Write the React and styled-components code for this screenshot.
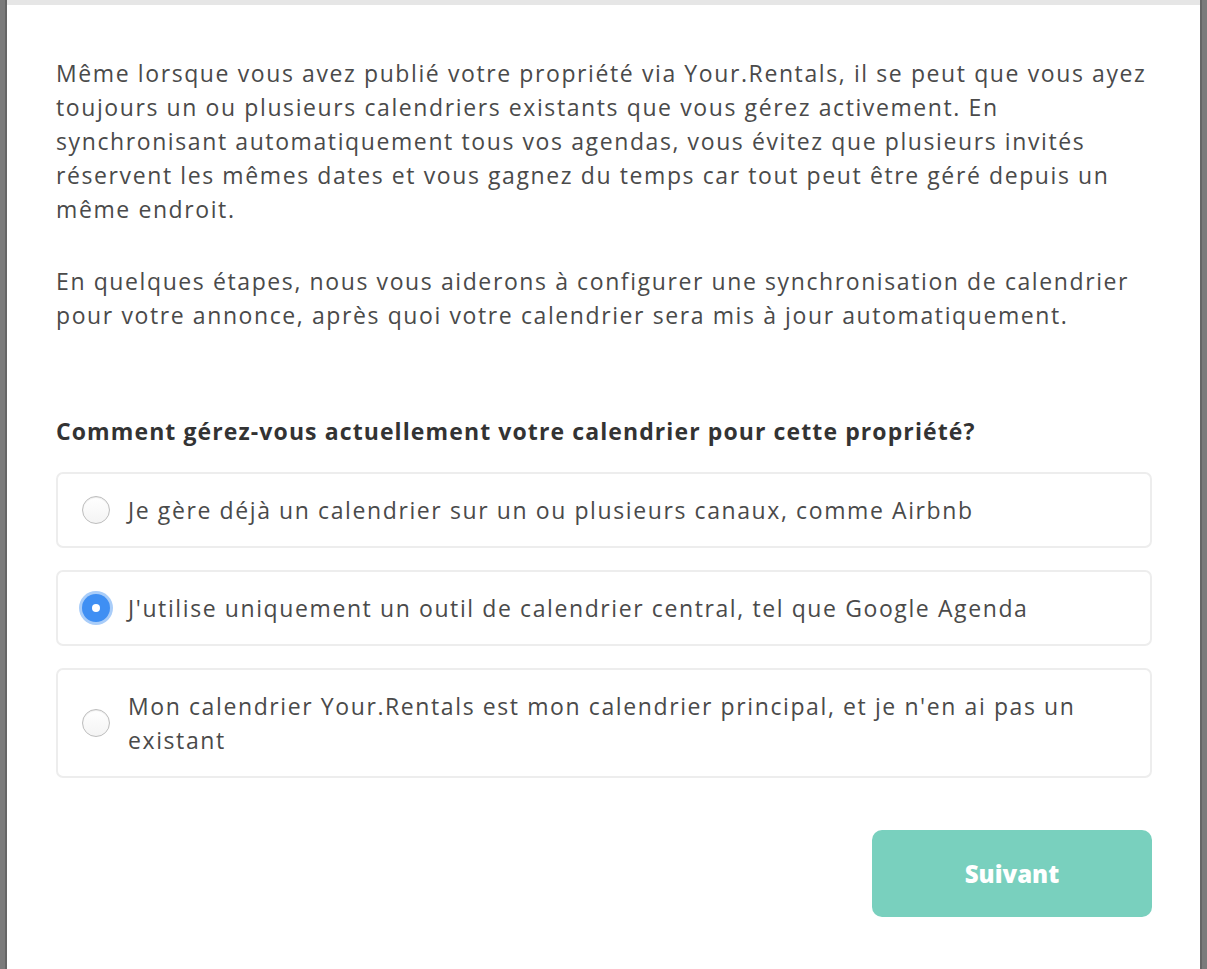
import React, { useState } from "react";
import styled, { createGlobalStyle } from "styled-components";

const GlobalStyle = createGlobalStyle`
  html, body {
    margin: 0;
    padding: 0;
    height: 100%;
  }
  body {
    font-family: "Open Sans", "Noto Sans", sans-serif;
    background: #7b7b7b;
  }
`;

const options = [
  "Je gère déjà un calendrier sur un ou plusieurs canaux, comme Airbnb",
  "J'utilise uniquement un outil de calendrier central, tel que Google Agenda",
  "Mon calendrier Your.Rentals est mon calendrier principal, et je n'en ai pas un existant",
];

export default function App() {
  const [choix, setChoix] = useState(1);

  return (
    <>
      <GlobalStyle />
      <Backdrop>
        <Modal>
          <TopBar />
          <Body>
            <Texte>
              Même lorsque vous avez publié votre propriété via Your.Rentals, il se peut que vous ayez
              toujours un ou plusieurs calendriers existants que vous gérez activement. En
              synchronisant automatiquement tous vos agendas, vous évitez que plusieurs invités
              réservent les mêmes dates et vous gagnez du temps car tout peut être géré depuis un
              même endroit.
            </Texte>
            <Texte>
              En quelques étapes, nous vous aiderons à configurer une synchronisation de calendrier
              pour votre annonce, après quoi votre calendrier sera mis à jour automatiquement.
            </Texte>
            <Question>Comment gérez-vous actuellement votre calendrier pour cette propriété?</Question>
            <Options>
              {options.map((label, i) => (
                <Option key={i} onClick={() => setChoix(i)}>
                  <Radio $checked={choix === i} />
                  <span>{label}</span>
                </Option>
              ))}
            </Options>
            <Footer>
              <Bouton>Suivant</Bouton>
            </Footer>
          </Body>
        </Modal>
      </Backdrop>
    </>
  );
}

const Backdrop = styled.div`
  min-height: 100vh;
  padding: 0 5px 0 5px;
  box-sizing: border-box;
  display: flex;
  justify-content: center;
`;

const Modal = styled.div`
  flex: 1;
  background: #ffffff;
  border-left: 2px solid #666666;
  border-right: 2px solid #666666;
  display: flex;
  flex-direction: column;
`;

const TopBar = styled.div`
  height: 5px;
  background: #e6e6e6;
`;

const Body = styled.div`
  padding: 51px 48px 52px 49px;
  color: #4a4a4a;
`;

const Texte = styled.p`
  margin: 0 0 38px 0;
  font-size: 23px;
  line-height: 34px;
  font-weight: 400;
  letter-spacing: 1.6px;
`;

const Question = styled.h2`
  margin: 84px 0 26px 0;
  font-size: 23px;
  line-height: 30px;
  font-weight: 700;
  color: #333333;
  letter-spacing: 1.1px;
`;

const Options = styled.div`
  display: flex;
  flex-direction: column;
  gap: 22px;
`;

const Option = styled.label`
  display: flex;
  align-items: center;
  gap: 18px;
  min-height: 76px;
  padding: 19px 22px 19px 24px;
  box-sizing: border-box;
  border: 2px solid #ededed;
  border-radius: 7px;
  font-size: 23px;
  line-height: 34px;
  letter-spacing: 1.6px;
  color: #4a4a4a;
  cursor: pointer;
`;

const Radio = styled.span`
  flex: none;
  width: 28px;
  height: 28px;
  border-radius: 50%;
  box-sizing: border-box;
  position: relative;
  ${(p) =>
    p.$checked
      ? `
    background: #3f8ff3;
    box-shadow: 0 0 0 3px #a9cdf9;
    &::after {
      content: "";
      position: absolute;
      left: 50%;
      top: 50%;
      width: 8px;
      height: 8px;
      margin: -4px 0 0 -4px;
      border-radius: 50%;
      background: #ffffff;
    }
  `
      : `
    background: linear-gradient(#ffffff, #f4f4f4);
    border: 1px solid #bdbdbd;
    box-shadow: inset 0 1px 1px rgba(0,0,0,0.08);
  `}
`;

const Footer = styled.div`
  display: flex;
  justify-content: flex-end;
  margin-top: 52px;
`;

const Bouton = styled.button`
  width: 280px;
  height: 87px;
  border: none;
  border-radius: 10px;
  background: #79d0be;
  color: #ffffff;
  font-family: "Open Sans", sans-serif;
  font-size: 24px;
  font-weight: 800;
  cursor: pointer;
`;
